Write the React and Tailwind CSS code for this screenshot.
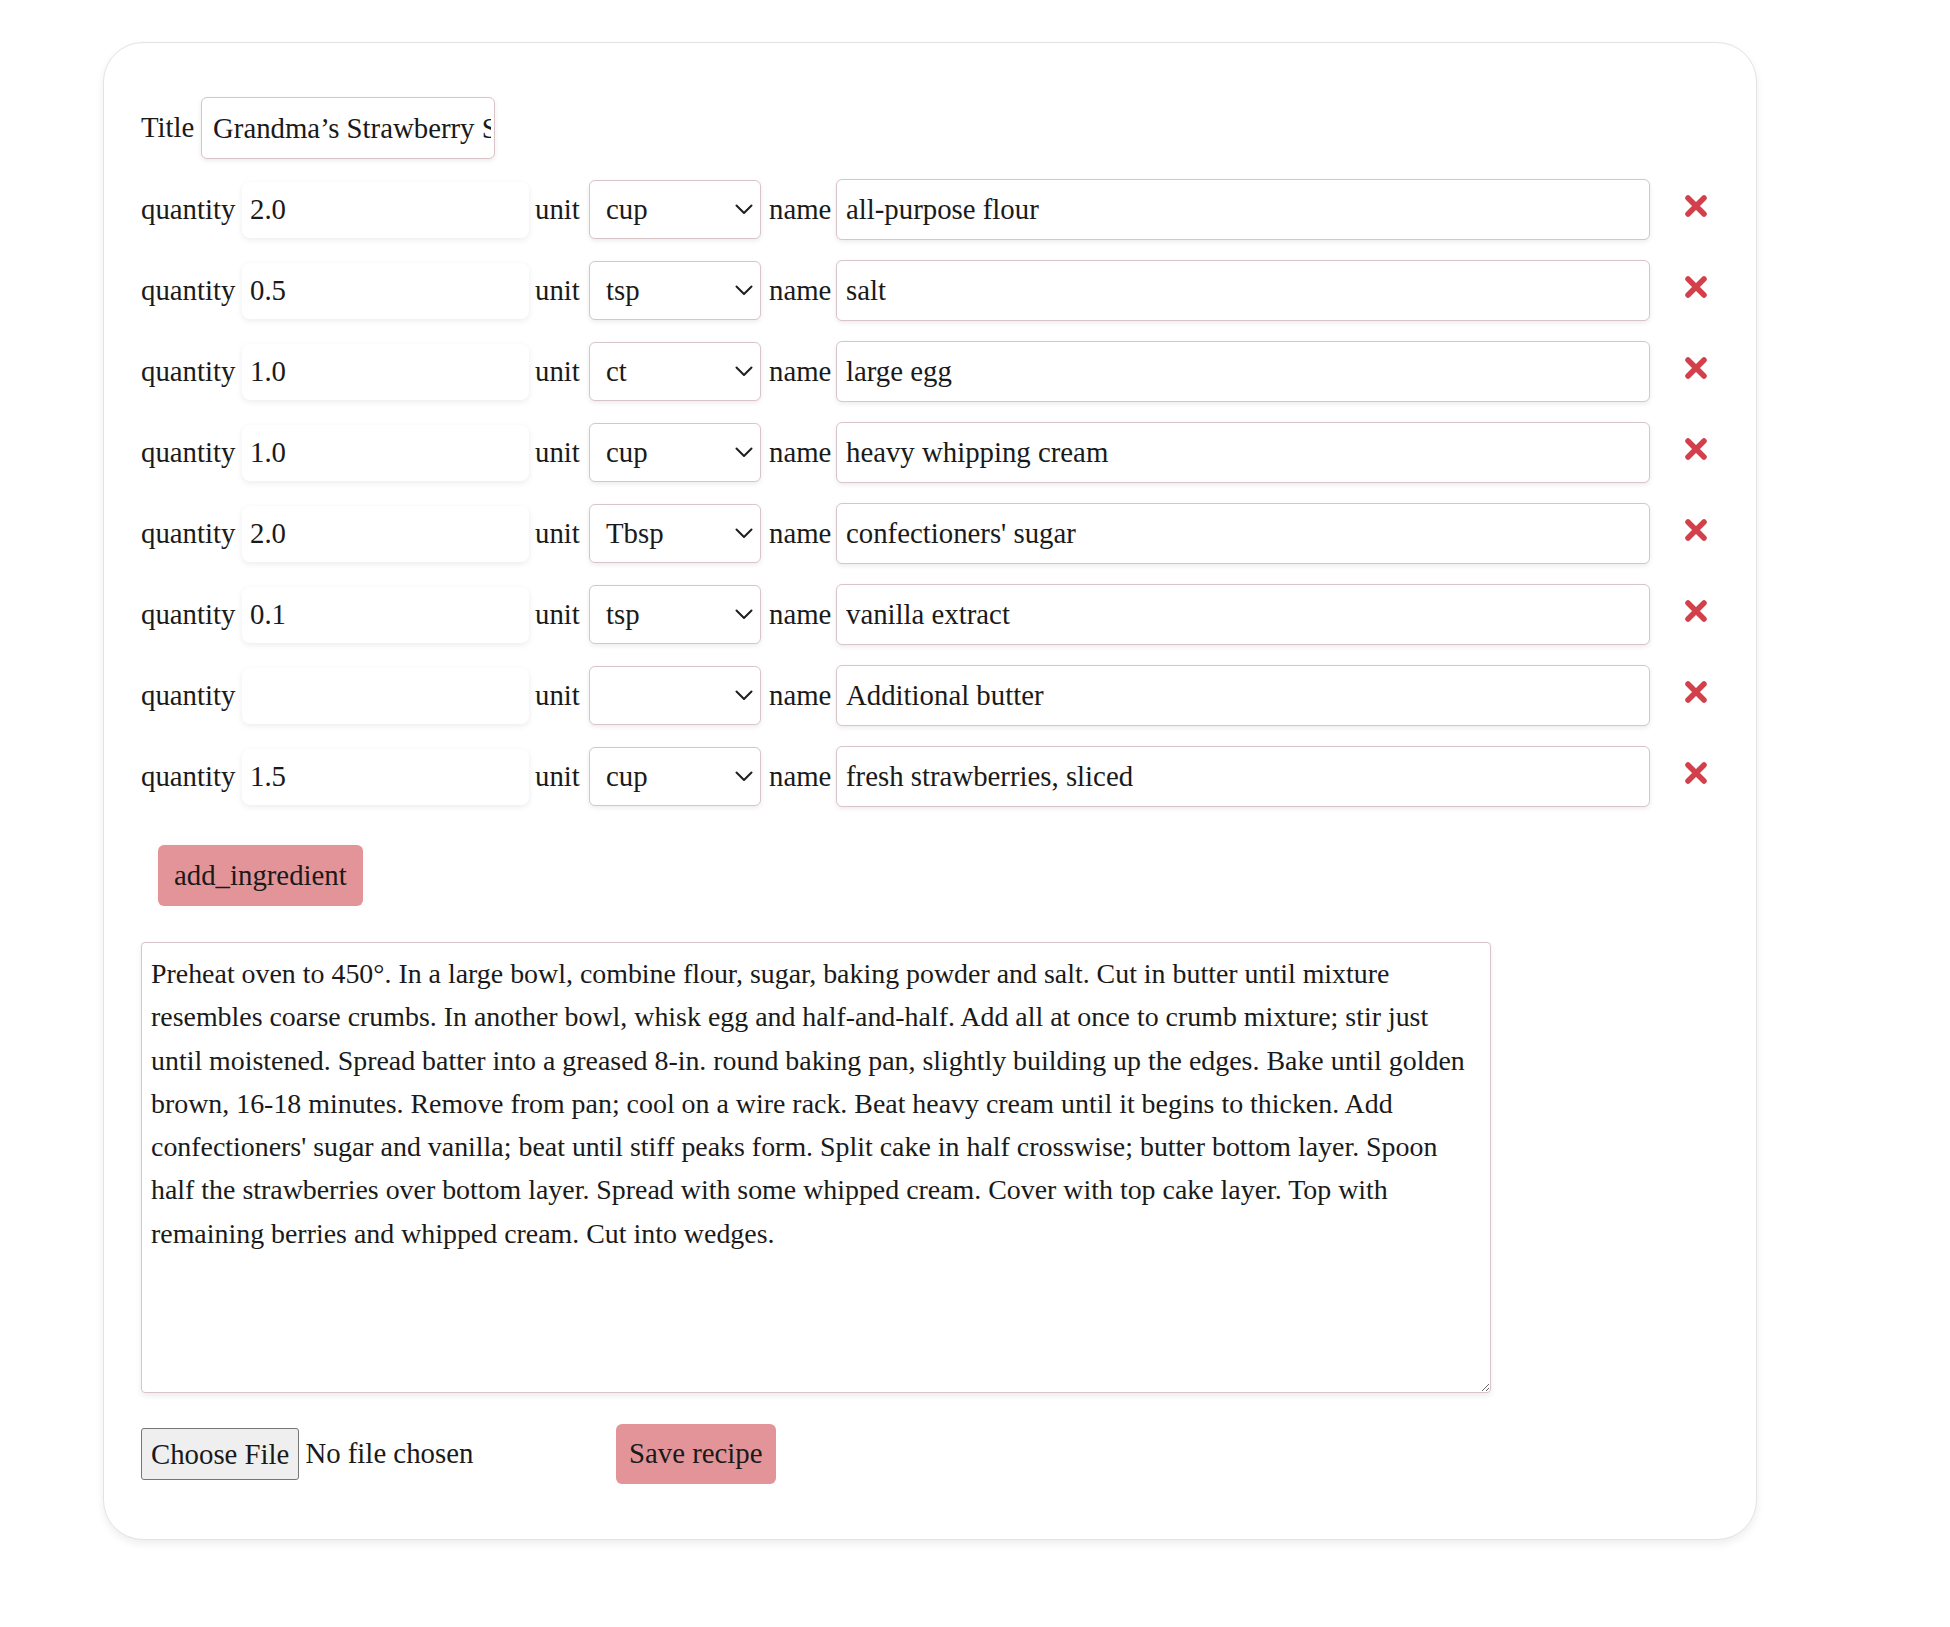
import React from 'react';

const ingredients = [
  { quantity: '2.0', unit: 'cup', name: 'all-purpose flour' },
  { quantity: '0.5', unit: 'tsp', name: 'salt' },
  { quantity: '1.0', unit: 'ct', name: 'large egg' },
  { quantity: '1.0', unit: 'cup', name: 'heavy whipping cream' },
  { quantity: '2.0', unit: 'Tbsp', name: "confectioners' sugar" },
  { quantity: '0.1', unit: 'tsp', name: 'vanilla extract' },
  { quantity: '', unit: '', name: 'Additional butter' },
  { quantity: '1.5', unit: 'cup', name: 'fresh strawberries, sliced' },
];

const units = ['', 'cup', 'tsp', 'Tbsp', 'ct', 'oz', 'lb', 'g'];

const instructions =
  "Preheat oven to 450°. In a large bowl, combine flour, sugar, baking powder and salt. Cut in butter until mixture resembles coarse crumbs. In another bowl, whisk egg and half-and-half. Add all at once to crumb mixture; stir just until moistened. Spread batter into a greased 8-in. round baking pan, slightly building up the edges. Bake until golden brown, 16-18 minutes. Remove from pan; cool on a wire rack. Beat heavy cream until it begins to thicken. Add confectioners' sugar and vanilla; beat until stiff peaks form. Split cake in half crosswise; butter bottom layer. Spoon half the strawberries over bottom layer. Spread with some whipped cream. Cover with top cake layer. Top with remaining berries and whipped cream. Cut into wedges.";

// heavy red cross used for removing a row
function RemoveIcon() {
  return (
    <svg width="26" height="26" viewBox="0 0 26 26" className="block">
      <path d="M5 5 L21 21 M21 5 L5 21" stroke="#d2414b" strokeWidth="5.5" strokeLinecap="round" />
    </svg>
  );
}

function Chevron() {
  return (
    <svg width="18" height="11" viewBox="0 0 18 11" className="absolute right-[8px] top-[24px] pointer-events-none">
      <polyline points="1.5,1.5 9,9 16.5,1.5" fill="none" stroke="#1f1f1f" strokeWidth="2" strokeLinecap="round" strokeLinejoin="round" />
    </svg>
  );
}

function IngredientRow({ item }) {
  return (
    <div className="flex items-center h-[61px]">
      <label className="w-[94px]">quantity</label>
      <input
        defaultValue={item.quantity}
        className="ml-[7px] w-[287px] h-[56px] px-[8px] bg-white rounded-[8px] shadow-[0_2px_6px_rgba(0,0,0,0.08)] outline-none"
      />
      <label className="ml-[6px] w-[45px]">unit</label>
      <div className="relative ml-[9px]">
        <select
          defaultValue={item.unit}
          className="appearance-none w-[172px] h-[59px] pl-[16px] pr-[36px] bg-white border border-[#d9c4c7] rounded-[6px] shadow-[0_2px_5px_rgba(0,0,0,0.08)] outline-none"
        >
          {units.map((u) => (
            <option key={u} value={u}>{u}</option>
          ))}
        </select>
        <Chevron />
      </div>
      <label className="ml-[8px] w-[63px]">name</label>
      <input
        defaultValue={item.name}
        className="ml-[4px] w-[814px] h-[61px] px-[9px] bg-white border border-[#d9c4c7] rounded-[6px] shadow-[0_2px_5px_rgba(0,0,0,0.08)] outline-none"
      />
      <button className="ml-[33px] mb-[8px]">
        <RemoveIcon />
      </button>
    </div>
  );
}

export default function App() {
  return (
    <div className="min-h-screen bg-white text-[#1a1a1a] text-[28.8px] leading-[1.5]" style={{ fontFamily: '"Liberation Serif", "Times New Roman", serif' }}>
      <div className="pt-[42px] pl-[103px] pb-[87px]">
        <div className="w-[1654px] rounded-[40px] border border-[#e3e3e3] bg-white shadow-[0_4px_8px_rgba(0,0,0,0.07)] pt-[54px] pb-[55px] pl-[37px]">
          <div className="flex items-center">
            <label className="w-[54px]">Title</label>
            <input
              defaultValue="Grandma’s Strawberry Shortcake"
              className="ml-[6px] w-[294px] h-[62px] pl-[11px] pr-[3px] bg-white border border-[#d9c4c7] rounded-[6px] shadow-[0_2px_5px_rgba(0,0,0,0.08)] outline-none"
            />
          </div>

          <div className="mt-[20px] flex flex-col gap-[20px]">
            {ingredients.map((item, i) => (
              <IngredientRow key={i} item={item} />
            ))}
          </div>

          <div className="mt-[38px] ml-[17px]">
            <button className="h-[61px] px-[16px] bg-[#e39499] rounded-[6px] text-[#1a1a1a] shadow-[0_0_12px_rgba(0,0,0,0.03)]">
              add_ingredient
            </button>
          </div>

          <textarea
            defaultValue={instructions}
            className="mt-[36px] block w-[1350px] h-[451px] px-[9px] py-[9px] text-[27.9px] leading-[43.3px] bg-white border border-[#d9c4c7] rounded-[4px] shadow-[0_3px_6px_rgba(0,0,0,0.08)] outline-none"
          />

          <div className="mt-[31px] flex items-center">
            <div className="w-[475px] flex items-center">
              <button className="h-[52px] px-[9px] bg-[#efefef] border border-[#767676] rounded-[3px] leading-none">
                Choose File
              </button>
              <span className="ml-[6px]">No file chosen</span>
            </div>
            <button className="h-[60px] px-[13px] bg-[#e39499] rounded-[6px] text-[#1a1a1a]">
              Save recipe
            </button>
          </div>
        </div>
      </div>
    </div>
  );
}
